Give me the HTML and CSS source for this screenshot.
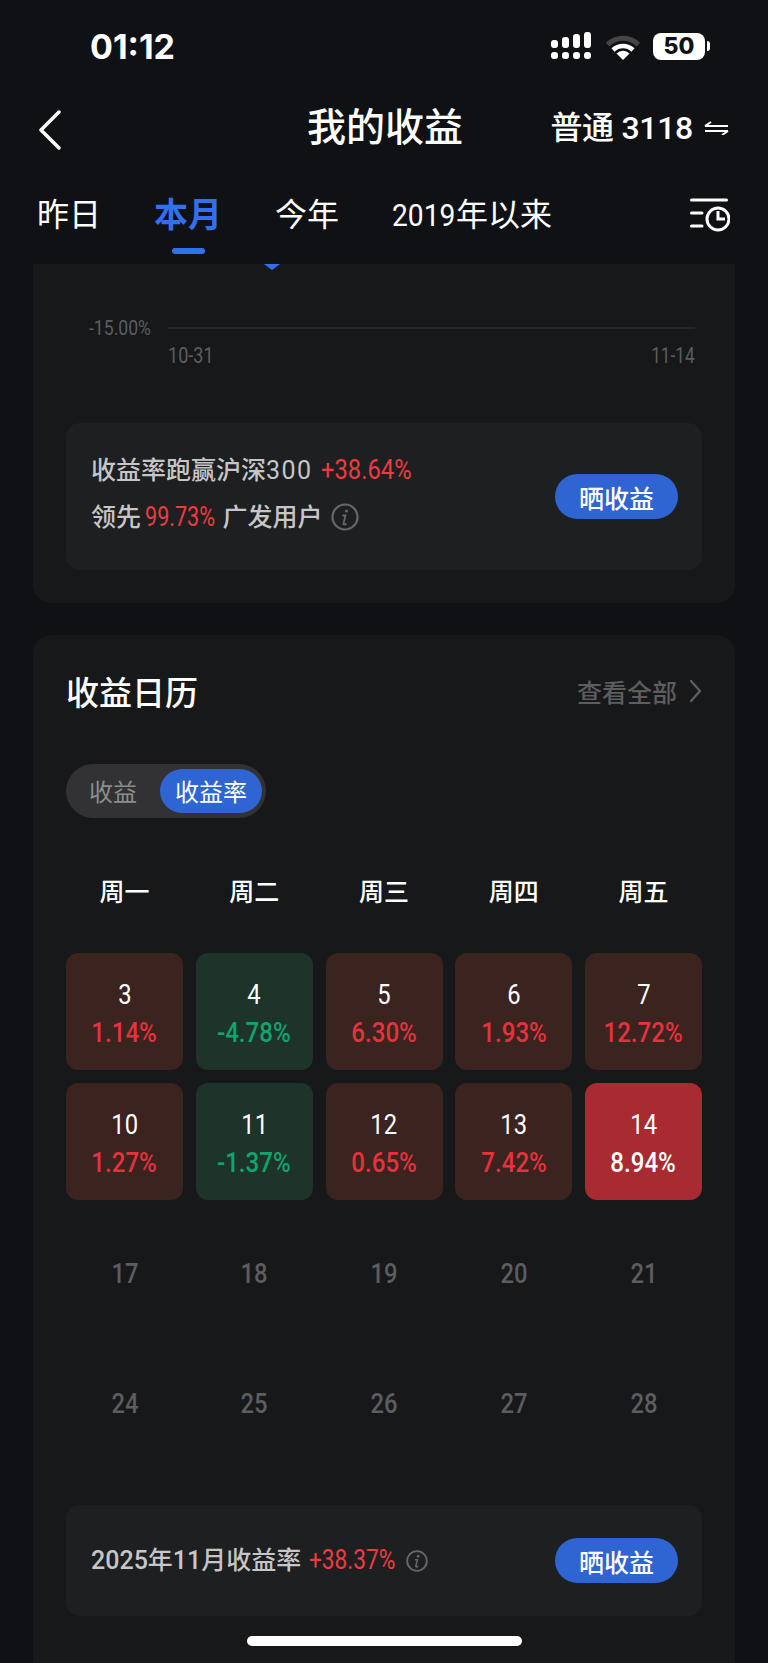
FILE: index.html
```html
<!DOCTYPE html>
<html lang="zh-CN">
<head>
    <meta charset="UTF-8">
    <meta name="viewport" content="width=device-width, initial-scale=1.0">
    <title>我的收益</title>
    <link rel="stylesheet" href="styles.css">
</head>
<body>

<div class="top">
    <div class="status">
        <span class="time">01:12</span>
        <div class="status-icons">
            <svg class="signal" width="40" height="28" viewBox="0 0 40 28" fill="#fff">
                <rect x="0" y="8" width="7" height="8" rx="3"/>
                <rect x="11" y="5" width="7" height="11" rx="3"/>
                <rect x="22" y="2" width="7" height="14" rx="3"/>
                <rect x="33" y="0" width="7" height="16" rx="3"/>
                <rect x="0" y="20" width="7" height="7" rx="3"/>
                <rect x="11" y="20" width="7" height="7" rx="3"/>
                <rect x="22" y="20" width="7" height="7" rx="3"/>
                <rect x="33" y="20" width="7" height="7" rx="3"/>
            </svg>
            <svg class="wifi" width="36" height="27" viewBox="0 0 36 27" fill="none">
                <path d="M2.6 11.6a22 22 0 0 1 30.8 0" stroke="#454545" stroke-width="5"/>
                <path d="M8 17a14.500 14.500 0 0 1 20 0" stroke="#fff" stroke-width="4.500"/>
                <path d="M18 27l-6.500-6.500a9.200 9.200 0 0 1 13 0z" fill="#fff"/>
            </svg>
            <div class="battery">50</div>
            <div class="battery-nub"></div>
        </div>
    </div>

    <div class="nav">
        <svg class="back" width="24" height="40" viewBox="0 0 24 40" fill="none">
            <path d="M21 2L3 20l18 18" stroke="#fff" stroke-width="3.500" stroke-linecap="round" stroke-linejoin="round"/>
        </svg>
        <div class="nav-title">我的收益</div>
        <div class="account">
            <span>普通 3118</span>
            <svg width="25" height="14" viewBox="0 0 25 14" fill="none" stroke="#fff" stroke-width="2">
                <path d="M1 5h23M1 5l6-4"/>
                <path d="M1 10h23M24 10l-6 4"/>
            </svg>
        </div>
    </div>

    <div class="tabs">
        <div class="tab">昨日</div>
        <div class="tab active">本月<i class="tab-line"></i></div>
        <div class="tab">今年</div>
        <div class="tab"><span class="tab-year">2019</span>年以来</div>
        <svg class="history" width="40" height="36" viewBox="2 0 40 36" fill="none" stroke="#fff" stroke-width="3">
            <path d="M3.500 3h35M3.500 16h10.500M3.500 29h10.500" stroke-linecap="round"/>
            <circle cx="30" cy="22" r="11"/>
            <path d="M30 14v8h7"/>
        </svg>
    </div>
</div>

<div class="card card-chart">
    <svg class="marker" width="16" height="6" viewBox="0 0 16 6"><path d="M0 0h16l-8 6z" fill="#3370f0"/></svg>
    <div class="chart-row">
        <span class="chart-label">-15.00%</span>
        <div class="chart-line"></div>
    </div>
    <div class="chart-dates">
        <span class="date-start">10-31</span>
        <span class="date-end">11-14</span>
    </div>
    <div class="box box-tall">
        <div class="box-text">
            <div>收益率跑赢沪深<span class="wide">300</span> <span class="num lead up">+38.64%</span></div>
            <div class="box-line">领先 <span class="num up">99.73%</span> 广发用户
                <svg class="info" width="28" height="28" viewBox="0 0 28 28" fill="none">
                    <circle cx="14" cy="14" r="12.500" stroke="#666" stroke-width="2.200"/>
                    <circle cx="15.500" cy="8" r="1.600" fill="#666"/>
                    <path d="M11.500 12.500h3l-2 8c-.3 1.200 1 1.500 3 0" stroke="#666" stroke-width="1.800"/>
                </svg>
            </div>
        </div>
        <button class="share">晒收益</button>
    </div>
</div>

<div class="card card-calendar">
    <div class="cal-head">
        <div class="cal-title">收益日历</div>
        <div class="cal-more">查看全部
            <svg width="13" height="24" viewBox="0 0 13 24" fill="none">
                <path d="M2 2l9 10-9 10" stroke="#5d5d5f" stroke-width="2.400" stroke-linecap="round" stroke-linejoin="round"/>
            </svg>
        </div>
    </div>

    <div class="toggle">
        <div class="toggle-item">收益</div>
        <div class="toggle-item on">收益率</div>
    </div>

    <div class="week">
        <div>周一</div><div>周二</div><div>周三</div><div>周四</div><div>周五</div>
    </div>

    <div class="days">
        <div class="day red"><b>3</b><span>1.14%</span></div>
        <div class="day green"><b>4</b><span>-4.78%</span></div>
        <div class="day red"><b>5</b><span>6.30%</span></div>
        <div class="day red"><b>6</b><span>1.93%</span></div>
        <div class="day red"><b>7</b><span>12.72%</span></div>
        <div class="day red"><b>10</b><span>1.27%</span></div>
        <div class="day green"><b>11</b><span>-1.37%</span></div>
        <div class="day red"><b>12</b><span>0.65%</span></div>
        <div class="day red"><b>13</b><span>7.42%</span></div>
        <div class="day today"><b>14</b><span>8.94%</span></div>
        <div class="day empty"><b>17</b></div>
        <div class="day empty"><b>18</b></div>
        <div class="day empty"><b>19</b></div>
        <div class="day empty"><b>20</b></div>
        <div class="day empty"><b>21</b></div>
        <div class="day empty"><b>24</b></div>
        <div class="day empty"><b>25</b></div>
        <div class="day empty"><b>26</b></div>
        <div class="day empty"><b>27</b></div>
        <div class="day empty"><b>28</b></div>
    </div>

    <div class="box box-short">
        <div class="box-text one-line"><span>2025年11月收益率</span> <span class="num up">+38.37%</span>
            <svg class="info" width="22" height="22" viewBox="0 0 28 28" fill="none">
                <circle cx="14" cy="14" r="12.500" stroke="#666" stroke-width="2.400"/>
                <circle cx="15.500" cy="8" r="1.800" fill="#666"/>
                <path d="M11.500 12.500h3l-2 8c-.3 1.200 1 1.500 3 0" stroke="#666" stroke-width="2"/>
            </svg>
        </div>
        <button class="share">晒收益</button>
    </div>
</div>

<div class="home-bar"></div>

</body>
</html>
```

FILE: styles.css
```css
body {
    margin: 0;
    width: 768px;
    height: 1663px;
    overflow: hidden;
    position: relative;
    background-color: #101114;
    color: #fff;
    font-family: Roboto, "Noto Sans CJK SC", sans-serif;
}

/* top bars */
.status {
    height: 92px;
    display: flex;
    align-items: center;
    justify-content: space-between;
    padding: 0 58px 0 90px;
}
.time {
    font-family: Inter, sans-serif;
    font-size: 34px;
    font-weight: 700;
}
.status-icons {
    display: flex;
    align-items: center;
}
.signal {
    margin-right: 14px;
}
.wifi {
    margin-right: 12px;
}
.battery {
    width: 52px;
    height: 27px;
    background: #fff;
    border-radius: 8px;
    color: #101114;
    font-family: Inter, sans-serif;
    font-size: 23px;
    font-weight: 800;
    line-height: 27px;
    text-align: center;
}
.battery-nub {
    width: 3px;
    height: 10px;
    margin-left: 2px;
    background: #fff;
    border-radius: 0 3px 3px 0;
}
.nav {
    height: 76px;
    display: flex;
    align-items: center;
    position: relative;
    padding: 0 39px 0 38px;
}
.nav-title {
    position: absolute;
    left: 307px;
    top: 14px;
    font-size: 39px;
    line-height: 44px;
    font-weight: 500;
}
.account {
    margin-left: auto;
    display: flex;
    align-items: center;
    gap: 11px;
    font-size: 32px;
    font-weight: 500;
    letter-spacing: -.3px;
    line-height: 40px;
    padding-bottom: 5px;
}
.tabs {
    height: 69px;
    padding: 27px 38px 0 37px;
    display: flex;
    align-items: flex-start;
    gap: 53px;
}
.tab {
    position: relative;
    font-size: 32px;
    line-height: 40px;
}
.tab.active {
    color: #3370f0;
    font-size: 34px;
    font-weight: 700;
}
.tab-line {
    display: block;
    width: 33px;
    height: 6px;
    margin: 13px auto 0;
    border-radius: 3px;
    background: #3370f0;
}
.tab-year {
    display: inline-block;
    transform: scaleX(.88);
    transform-origin: left;
    margin-right: -8px;
}
.history {
    margin-left: auto;
    margin-top: 2px;
}

/* cards */
.card {
    margin: 0 33px;
    background: #17181a;
    position: relative;
}
.card-chart {
    height: 339px;
    padding: 52px 33px 0;
    box-sizing: border-box;
    border-radius: 0 0 18px 18px;
}
.marker {
    position: absolute;
    left: 231px;
    top: 0;
}
.chart-row {
    display: flex;
    align-items: center;
    height: 24px;
    padding: 0 7px 0 23px;
}
.chart-label {
    width: 79px;
    font-size: 20px;
    color: #5c5d5f;
    transform: scaleX(.88);
    transform-origin: left;
}
.chart-line {
    flex: 1;
    height: 2px;
    background: #26272a;
}
.chart-dates {
    display: flex;
    justify-content: space-between;
    height: 24px;
    margin-top: 4px;
    padding: 0 7px 0 102px;
    font-size: 22px;
    line-height: 24px;
    color: #5c5d5f;
}
.date-start {
    transform: scaleX(.82);
    transform-origin: left;
}
.date-end {
    transform: scaleX(.78);
    transform-origin: right;
}
.box {
    display: flex;
    align-items: center;
    justify-content: space-between;
    background: #1e1f21;
    border-radius: 14px;
    padding: 0 24px 0 25px;
    box-sizing: border-box;
}
.box-tall {
    height: 147px;
    margin-top: 55px;
}
.box-short {
    height: 111px;
    margin: 45px 33px 0;
}
.box-text {
    font-size: 25px;
    font-weight: 500;
    line-height: 47px;
    color: #c6c6c8;
    padding-bottom: 6px;
}
.box-line {
    display: flex;
    align-items: center;
    gap: 4px;
}
.box-line .num {
    transform: scaleX(.8);
}
.box-line .info {
    margin-left: 4px;
}
.one-line {
    display: flex;
    align-items: center;
    gap: 8px;
    padding-bottom: 0;
}
.wide {
    font-weight: 400;
    letter-spacing: 1.5px;
}
.num {
    display: inline-block;
    font-size: 27px;
    font-weight: 400;
    transform: scaleX(.84);
    transform-origin: left;
    margin-right: -14px;
}
.num.lead {
    transform: scaleX(.88);
    margin-left: 2px;
}
.up {
    color: #ef3b40;
}
.info {
    flex: none;
}
.share {
    width: 123px;
    height: 45px;
    border: none;
    border-radius: 23px;
    background-color: #2f64d3;
    color: #fff;
    font-family: "Noto Sans CJK SC", sans-serif;
    font-size: 25px;
    font-weight: 500;
    padding: 0;
}

/* calendar */
.card-calendar {
    margin-top: 32px;
    padding: 34px 0 60px;
    border-radius: 18px 18px 0 0;
}
.cal-head {
    display: flex;
    align-items: center;
    justify-content: space-between;
    padding: 0 33px;
    height: 44px;
}
.cal-title {
    font-size: 33px;
    font-weight: 500;
}
.cal-more {
    display: flex;
    align-items: center;
    gap: 12px;
    font-size: 25px;
    font-weight: 500;
    color: #5d5d5f;
}
.toggle {
    display: inline-flex;
    margin: 51px 0 0 33px;
    height: 54px;
    width: 200px;
    box-sizing: border-box;
    padding: 5px 4px 5px 0;
    background: #323234;
    border-radius: 27px;
    font-size: 24px;
    vertical-align: top;
}
.toggle-item {
    line-height: 48px;
    text-align: center;
    color: #8d8d8f;
    width: 94px;
}
.toggle-item.on {
    width: 102px;
    color: #fff;
    background: #2f64d3;
    border-radius: 22px;
}
.week,
.days {
    display: grid;
    grid-template-columns: repeat(5, 117px);
    justify-content: space-between;
    padding: 0 33px;
    text-align: center;
}
.week {
    margin-top: 57px;
    font-size: 25px;
    font-weight: 500;
    line-height: 36px;
}
.days {
    margin-top: 42px;
    grid-auto-rows: 117px;
    row-gap: 13px;
}
.day {
    display: flex;
    flex-direction: column;
    align-items: center;
    justify-content: center;
    padding-top: 5px;
    box-sizing: border-box;
    border-radius: 12px;
    font-size: 28px;
    line-height: 38px;
}
.day b {
    font-weight: 400;
    transform: scaleX(.85);
}
.day span {
    font-weight: 500;
    transform: scaleX(.86);
}
.red {
    background: #3b2320;
}
.red span {
    color: #e5323b;
}
.green {
    background: #1e3329;
}
.green span {
    color: #10a56f;
}
.today {
    background: #a72b30;
}
.empty b {
    color: #5c5d5f;
    font-weight: 500;
}

.home-bar {
    position: absolute;
    left: 247px;
    top: 1636px;
    width: 275px;
    height: 10px;
    border-radius: 5px;
    background: #fff;
}
```
